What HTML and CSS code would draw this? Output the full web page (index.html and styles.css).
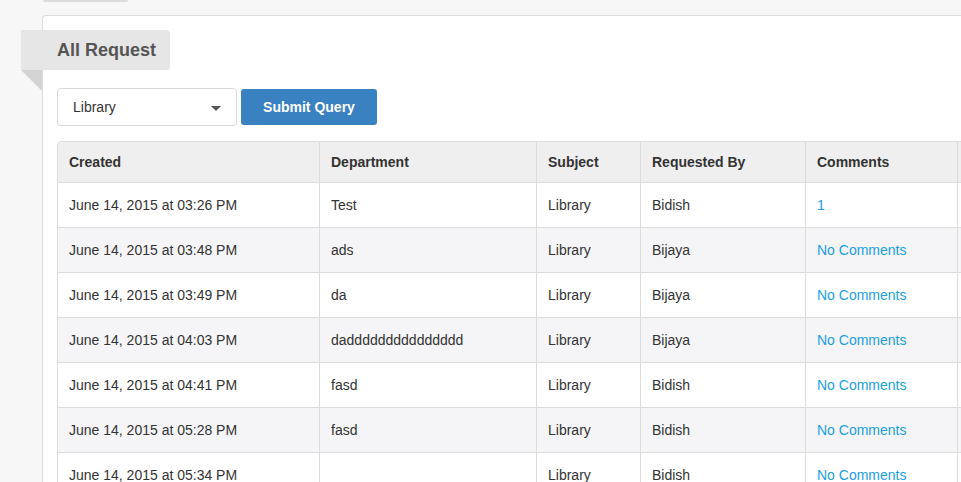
FILE: index.html
```html
<!DOCTYPE html>
<html>
<head>
<meta charset="utf-8">
<link rel="stylesheet" href="styles.css">
</head>
<body>
<div class="topnav"><div class="toptab"></div></div>
<div class="card">
  <div class="ribbon"><span>All Request</span></div>
  <form class="filter">
    <div class="select"><span>Library</span><i class="caret"></i></div>
    <button type="button" class="btn">Submit Query</button>
  </form>
  <table class="grid">
    <colgroup>
      <col class="c1"><col class="c2"><col class="c3"><col class="c4"><col class="c5"><col class="c6">
    </colgroup>
    <thead>
      <tr><th>Created</th><th>Department</th><th>Subject</th><th>Requested By</th><th>Comments</th><th></th></tr>
    </thead>
    <tbody>
      <tr><td>June 14, 2015 at 03:26 PM</td><td>Test</td><td>Library</td><td>Bidish</td><td><a href="#">1</a></td><td></td></tr>
      <tr><td>June 14, 2015 at 03:48 PM</td><td>ads</td><td>Library</td><td>Bijaya</td><td><a href="#">No Comments</a></td><td></td></tr>
      <tr><td>June 14, 2015 at 03:49 PM</td><td>da</td><td>Library</td><td>Bijaya</td><td><a href="#">No Comments</a></td><td></td></tr>
      <tr><td>June 14, 2015 at 04:03 PM</td><td>daddddddddddddddd</td><td>Library</td><td>Bijaya</td><td><a href="#">No Comments</a></td><td></td></tr>
      <tr><td>June 14, 2015 at 04:41 PM</td><td>fasd</td><td>Library</td><td>Bidish</td><td><a href="#">No Comments</a></td><td></td></tr>
      <tr><td>June 14, 2015 at 05:28 PM</td><td>fasd</td><td>Library</td><td>Bidish</td><td><a href="#">No Comments</a></td><td></td></tr>
      <tr><td>June 14, 2015 at 05:34 PM</td><td></td><td>Library</td><td>Bidish</td><td><a href="#">No Comments</a></td><td></td></tr>
    </tbody>
  </table>
</div>
</body>
</html>
```
FILE: styles.css
```css
html, body {
  margin: 0;
  padding: 0;
  overflow: hidden;
  height: 100%;
}
body {
  background: #f7f7f7;
  font-family: "Liberation Sans", Arial, sans-serif;
  font-size: 14px;
  color: #333;
}
.topnav {
  height: 3px;
  padding-left: 43px;
}
.toptab {
  width: 85px;
  height: 2px;
  background: #dcdcdc;
  border-radius: 0 0 4px 4px;
}
.card {
  margin: 12px 0 0 42px;
  background: #fff;
  border: 1px solid #dcdcdc;
  border-right: none;
  border-radius: 4px 0 0 0;
  padding: 14px 0 0 14px;
  width: 1200px;
  height: 600px;
}
.ribbon {
  position: relative;
  margin-left: -36px;
  width: 149px;
  height: 40px;
  box-sizing: border-box;
  padding-left: 36px;
  background: #e6e6e6;
  border-radius: 0 4px 4px 0;
  display: flex;
  align-items: center;
}
.ribbon span {
  font-size: 18px;
  font-weight: bold;
  color: #555;
}
.ribbon::after {
  content: "";
  position: absolute;
  left: 0;
  top: 40px;
  border-top: 21px solid #d4d4d4;
  border-left: 21px solid transparent;
}
.filter {
  display: flex;
  align-items: center;
  gap: 4px;
  margin-top: 18px;
  margin-bottom: 15px;
}
.select {
  width: 180px;
  height: 38px;
  box-sizing: border-box;
  border: 1px solid #dadada;
  border-radius: 4px;
  background: #fff;
  display: flex;
  align-items: center;
  justify-content: space-between;
  padding: 0 15px 0 15px;
  color: #333;
}
.caret {
  width: 0;
  height: 0;
  border-left: 5px solid transparent;
  border-right: 5px solid transparent;
  border-top: 5px solid #555;
  margin-top: 2px;
}
.btn {
  height: 36px;
  width: 136px;
  border: none;
  border-radius: 3px;
  background: #3a81c1;
  color: #fff;
  font-family: "Liberation Sans", Arial, sans-serif;
  font-size: 14px;
  font-weight: bold;
  padding: 0;
}
.grid {
  border-collapse: separate;
  border-spacing: 0;
  table-layout: fixed;
  width: 1101px;
}
.c1 { width: 263px; }
.c2 { width: 217px; }
.c3 { width: 104px; }
.c4 { width: 165px; }
.c5 { width: 152px; }
.c6 { width: 200px; }
.grid th, .grid td {
  text-align: left;
  padding: 0 0 0 11px;
  border-right: 1px solid #dcdcdc;
  border-bottom: 1px solid #dcdcdc;
  white-space: nowrap;
  overflow: hidden;
}
.grid th:first-child, .grid td:first-child {
  border-left: 1px solid #dcdcdc;
}
.grid th {
  height: 40px;
  background: #efefef;
  border-top: 1px solid #dcdcdc;
  font-weight: bold;
  color: #333;
}
.grid th:first-child {
  border-top-left-radius: 4px;
}
.grid td {
  height: 44px;
}
.grid tbody tr:nth-child(even) td {
  background: #f5f5f7;
}
.grid a {
  color: #1a9fe0;
  text-decoration: none;
}
```
